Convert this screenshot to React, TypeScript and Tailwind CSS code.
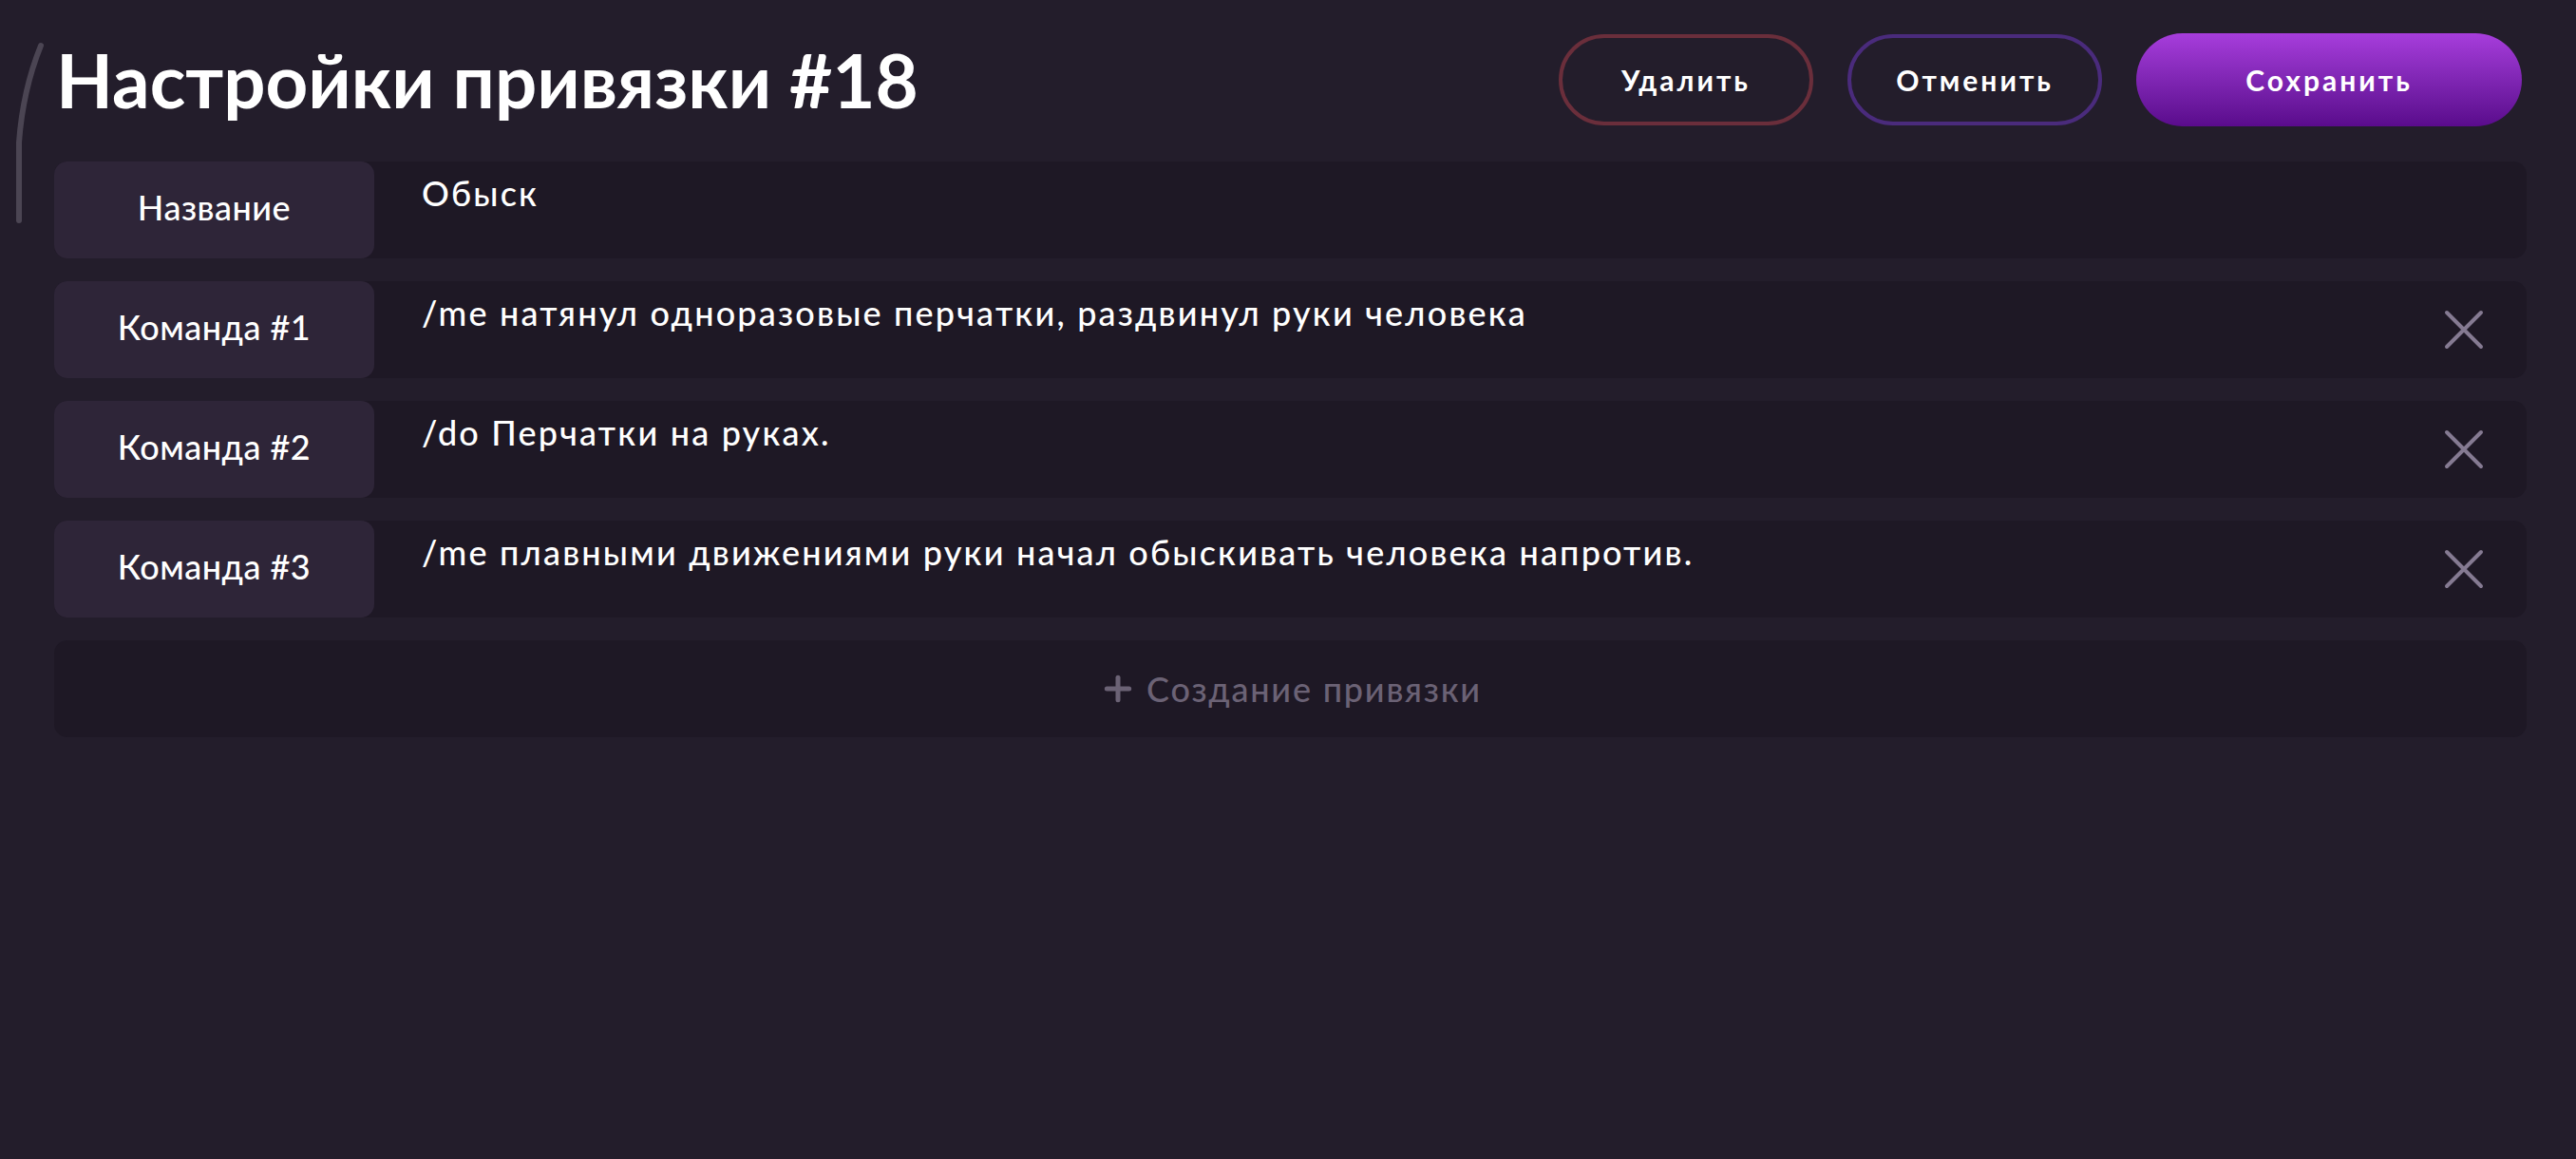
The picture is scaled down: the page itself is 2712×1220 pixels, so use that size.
import { Plus } from 'lucide-react'

const commands = [
  '/me натянул одноразовые перчатки, раздвинул руки человека',
  '/do Перчатки на руках.',
  '/me плавными движениями руки начал обыскивать человека напротив.',
]

function Row({ label, value, removable }: { label: string; value: string; removable?: boolean }) {
  return (
    <div className="flex h-[102px] rounded-[14px] bg-[#1e1825]">
      <div className="flex w-[337px] shrink-0 items-center justify-center rounded-[14px] bg-[#2e2538] pb-[6px] text-[36px] font-medium tracking-[0.5px] text-white">
        {label}
      </div>
      <div className="flex-1 pl-[50px] pt-[6px] text-[36px] font-medium tracking-[2.2px] text-white">{value}</div>
      {removable && (
        <button className="mr-[45px] flex items-center">
          <svg width="42" height="42" viewBox="0 0 42 42">
            <path d="M3 3 L39 39 M39 3 L3 39" stroke="#857a92" strokeWidth="4" strokeLinecap="round" />
          </svg>
        </button>
      )}
    </div>
  )
}

export default function App() {
  return (
    <div className="relative min-h-screen w-full bg-[#231d2b] font-['Lato',sans-serif]">
      {/* scroll thumb */}
      <svg className="absolute left-0 top-0" width="60" height="260" viewBox="0 0 60 260">
        <path d="M43 48 Q24 95 20 150 L20 232" fill="none" stroke="#4b4553" strokeWidth="6" strokeLinecap="round" />
      </svg>

      <div className="pl-[57px] pr-[52px] pt-[35px]">
        <div className="flex items-center justify-between">
          <h1 className="pl-[2px] text-[78px] font-bold leading-none text-white">Настройки привязки #18</h1>
          <div className="mr-[5px] flex items-center gap-[36px]">
            <button className="h-[96px] w-[268px] rounded-full border-[4px] border-[#6a2e3b] text-[30px] font-bold tracking-[3px] text-white">
              Удалить
            </button>
            <button className="h-[96px] w-[268px] rounded-full border-[4px] border-[#4a2b7c] text-[30px] font-bold tracking-[3px] text-white">
              Отменить
            </button>
            <button className="h-[98px] w-[406px] rounded-full bg-gradient-to-b from-[#a73ddc] to-[#5a0b8c] text-[30px] font-bold tracking-[3px] text-white">
              Сохранить
            </button>
          </div>
        </div>

        <div className="mt-[37px] flex flex-col gap-[24px]">
          <Row label="Название" value="Обыск" />
          {commands.map((c, i) => (
            <Row key={i} label={`Команда #${i + 1}`} value={c} removable />
          ))}
          <button className="flex h-[102px] items-center justify-center gap-[10px] rounded-[14px] bg-[#1e1825] text-[36px] font-medium tracking-[1.8px] text-[#6b6275]">
            <Plus size={40} strokeWidth={3} />
            Создание привязки
          </button>
        </div>
      </div>
    </div>
  )
}
